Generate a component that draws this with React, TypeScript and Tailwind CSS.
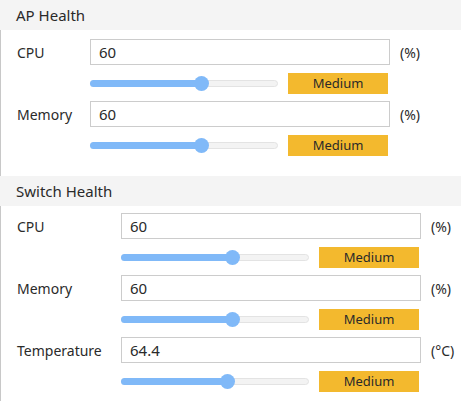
import React from "react";

function Slider({ frac }: { frac: number }) {
  const thumb = 15;
  const width = 188;
  const left = frac * (width - thumb);
  return (
    <div className="relative h-[15px] w-[188px]">
      <div className="absolute left-0 top-[4px] h-[7px] w-[188px] rounded-full border border-[#e3e3e3] bg-[#f3f3f3]" />
      <div
        className="absolute left-0 top-[4px] h-[7px] rounded-full bg-[#80b9f8]"
        style={{ width: left + thumb / 2 }}
      />
      <div
        className="absolute top-0 h-[15px] w-[15px] rounded-full bg-[#80b9f8]"
        style={{ left }}
      />
    </div>
  );
}

function Row({
  label,
  value,
  unit,
  frac,
  labelW,
  first,
}: {
  label: string;
  value: string;
  unit: string;
  frac: number;
  labelW: string;
  first?: boolean;
}) {
  return (
    <div className={first ? "" : "mt-[7px]"}>
      <div className="flex items-center">
        <div className={`${labelW} shrink-0 pl-4 text-[14px] text-[#2a2a2a]`}>{label}</div>
        <div className="flex h-[26px] w-[300px] items-center border border-[#cccccc] pl-2 text-[15px] text-[#2a2a2a]">
          {value}
        </div>
        <div className="ml-[10px] text-[14px] text-[#2a2a2a]">{unit}</div>
      </div>
      <div className="mt-[8px] flex items-center">
        <div className={`${labelW} shrink-0`} />
        <Slider frac={frac} />
        <div className="ml-[10px] flex h-[21px] w-[100px] items-center justify-center bg-[#f3b92e] text-[13px] text-[#2a2a2a]">
          Medium
        </div>
      </div>
    </div>
  );
}

export default function App() {
  return (
    <div
      className="h-[401px] w-[461px] overflow-hidden bg-white"
      style={{ fontFamily: '"Noto Sans", "Open Sans", sans-serif' }}
    >
      <div className="flex h-[30px] items-center bg-[#f4f4f4] pl-4 text-[15px] text-[#2a2a2a]">
        AP Health
      </div>
      <div className="h-[146px] border-l border-[#c8c8c8] pt-[9px]">
        <Row label="CPU" value="60" unit="(%)" frac={0.6} labelW="w-[89px]" first />
        <Row label="Memory" value="60" unit="(%)" frac={0.6} labelW="w-[89px]" />
      </div>
      <div className="flex h-[30px] items-center bg-[#f4f4f4] pl-4 text-[15px] text-[#2a2a2a]">
        Switch Health
      </div>
      <div className="h-[195px] border-l border-[#c8c8c8] pt-[7px]">
        <Row label="CPU" value="60" unit="(%)" frac={0.6} labelW="w-[120px]" first />
        <Row label="Memory" value="60" unit="(%)" frac={0.6} labelW="w-[120px]" />
        <Row label="Temperature" value="64.4" unit="(°C)" frac={0.57} labelW="w-[120px]" />
      </div>
    </div>
  );
}
